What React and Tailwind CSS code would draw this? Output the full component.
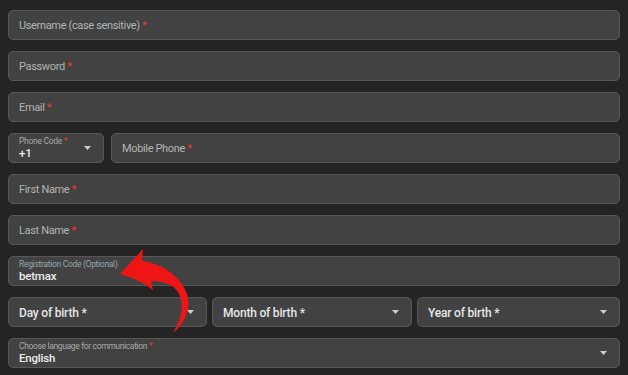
import React from "react";

const Star = () => <span className="text-[#e53935]"> *</span>;

const Caret = () => (
  <svg width="7" height="4" viewBox="0 0 7 4" className="shrink-0">
    <path d="M0 0 L7 0 L3.5 4 Z" fill="#cfcfcf" />
  </svg>
);

const Field = ({ children, className = "" }) => (
  <div
    className={`h-[30px] rounded-[5px] border border-[#575757] bg-[#424242] flex items-center px-[10px] ${className}`}
  >
    {children}
  </div>
);

const Plain = ({ label }) => (
  <Field className="w-full">
    <span className="text-[11px] tracking-[-0.35px] text-[#b4b4b4] pt-[2px]">
      {label}
      <Star />
    </span>
  </Field>
);

const Select = ({ label, className }) => (
  <Field className={`justify-between pr-[12px] ${className}`}>
    <span className="text-[12px] tracking-[-0.2px] font-medium text-[#e6e6e6] pt-[1px]">{label}</span>
    <Caret />
  </Field>
);

export default function App() {
  return (
    <div
      className="relative w-[628px] h-[375px] bg-[#242424] overflow-hidden px-[8px] pt-[10px] flex flex-col gap-[11px]"
      style={{ fontFamily: "Roboto, 'Liberation Sans', sans-serif" }}
    >
      <Plain label="Username (case sensitive)" />
      <Plain label="Password" />
      <Plain label="Email" />
      <div className="flex gap-[7px]">
        <Field className="w-[96px] justify-between pr-[12px]">
          <div className="flex flex-col leading-none">
            <span className="text-[8.5px] tracking-[-0.3px] text-[#a8a8a8] mb-[2px]">
              Phone Code<Star />
            </span>
            <span className="text-[11.5px] tracking-[-0.2px] font-medium text-[#ececec]">+1</span>
          </div>
          <Caret />
        </Field>
        <Field className="flex-1">
          <span className="text-[11px] tracking-[-0.35px] text-[#b4b4b4] pt-[2px]">
            Mobile Phone
            <Star />
          </span>
        </Field>
      </div>
      <Plain label="First Name" />
      <Plain label="Last Name" />
      <Field className="w-full">
        <div className="flex flex-col leading-none">
          <span className="text-[8.5px] tracking-[-0.3px] text-[#9aa3ad] mb-[2px]">Registration Code (Optional)</span>
          <span className="text-[11.5px] tracking-[-0.2px] font-medium text-[#ececec]">betmax</span>
        </div>
      </Field>
      <div className="flex gap-[5px]">
        <Select label="Day of birth *" className="w-[199px]" />
        <Select label="Month of birth *" className="w-[200px]" />
        <Select label="Year of birth *" className="flex-1" />
      </div>
      <Field className="w-full justify-between pr-[12px]">
        <div className="flex flex-col leading-none">
          <span className="text-[8.5px] tracking-[-0.35px] text-[#a8a8a8] mb-[2px]">
            Choose language for communication<Star />
          </span>
          <span className="text-[11.5px] tracking-[-0.2px] font-medium text-[#ececec]">English</span>
        </div>
        <Caret />
      </Field>
      <svg
        className="absolute left-0 top-0 pointer-events-none"
        width="628"
        height="375"
        viewBox="0 0 628 375"
      >
        <path
          d="M143,249 L142,261 C160,263 180,275 187,294 C191,308 186,322 173,333 C181,320 184,307 180,296 C176,286 166,281 151,281 L153,290 C143,282 131,277 120,274 Z"
          fill="#f01515"
        />
      </svg>
    </div>
  );
}
